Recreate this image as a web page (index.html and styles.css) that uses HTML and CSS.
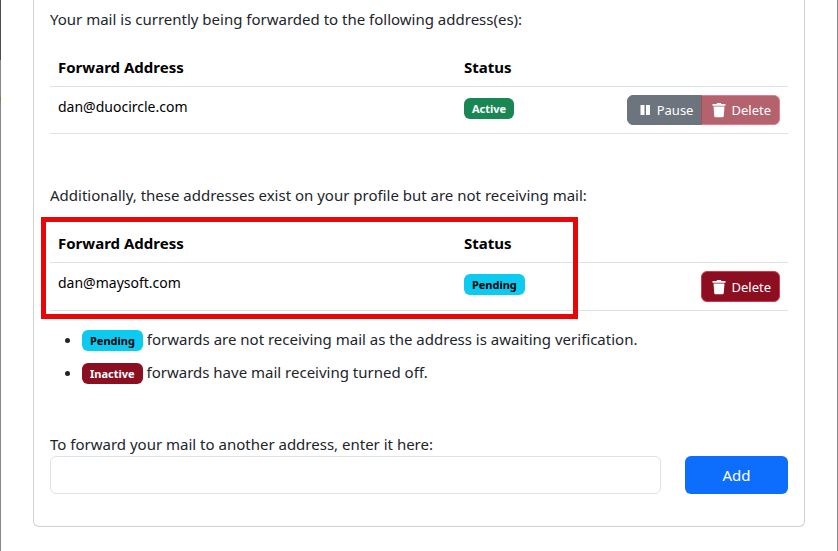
FILE: index.html
```html
<!DOCTYPE html>
<html lang="en">
  <head>
    <meta charset="UTF-8" />
    <meta name="viewport" content="width=device-width, initial-scale=1.0" />
    <title>Mail Forwarding</title>
    <link rel="stylesheet" href="styles.css">
  </head>
  <body>
    <svg class="sprite" aria-hidden="true">
      <symbol id="trash" viewBox="0 0 14 16">
        <path d="M.5 2h4l.7-1h3.600l.7 1h4v1.800H.5z" />
        <path d="M1.500 4.500h11l-.8 9.800q-.1.900-1 .9H3.300q-.9 0-1-.9z" />
      </symbol>
      <symbol id="pause" viewBox="0 0 14 16">
        <path d="M2.500 3h4v10h-4zM8 3h4v10H8z" />
      </symbol>
    </svg>
    <div class="page">
      <main class="panel">
        <p class="intro">Your mail is currently being forwarded to the following address(es):</p>
        <div class="forwards">
          <table>
            <thead>
              <tr>
                <th class="col-address">Forward Address</th>
                <th class="col-status">Status</th>
                <td></td>
              </tr>
            </thead>
            <tbody>
              <tr>
                <td class="address">dan@duocircle.com</td>
                <td><span class="badge active">Active</span></td>
                <td>
                  <div class="actions">
                    <button type="button" class="btn pause"><svg><use href="#pause" /></svg>Pause</button>
                    <button type="button" class="btn delete" disabled><svg><use href="#trash" /></svg>Delete</button>
                  </div>
                </td>
              </tr>
            </tbody>
          </table>
        </div>
        <p class="intro second">Additionally, these addresses exist on your profile but are not receiving mail:</p>
        <div class="forwards">
          <table>
            <thead>
              <tr>
                <th class="col-address">Forward Address</th>
                <th class="col-status">Status</th>
                <td></td>
              </tr>
            </thead>
            <tbody>
              <tr>
                <td class="address">dan@maysoft.com</td>
                <td><span class="badge pending">Pending</span></td>
                <td>
                  <div class="actions">
                    <button type="button" class="btn delete"><svg><use href="#trash" /></svg>Delete</button>
                  </div>
                </td>
              </tr>
            </tbody>
          </table>
          <div class="highlight"></div>
        </div>
        <ul class="legend">
          <li><span class="badge pending">Pending</span> forwards are not receiving mail as the address is awaiting verification.</li>
          <li><span class="badge inactive">Inactive</span> forwards have mail receiving turned off.</li>
        </ul>
        <form class="add-form">
          <label for="newAddress">To forward your mail to another address, enter it here:</label>
          <input type="email" id="newAddress" name="address" />
          <button type="submit">Add</button>
        </form>
      </main>
    </div>
  </body>
</html>
```
FILE: styles.css
```css
* {
  box-sizing: border-box;
}
body {
  margin: 0;
  font-family: 'Noto Sans', 'Open Sans', sans-serif;
  font-size: 15px;
  line-height: 24px;
  color: #212529;
  background-color: #fff;
}
.sprite {
  display: none;
}
.page {
  min-height: 100vh;
  padding: 0 32px 24px 33px;
  border-right: 1px solid #88888a;
  background: linear-gradient(#4c4a52 60px, #88888a 60px 97px, #6d8a4e 97px 101px, #88888a 101px)
    0 0 / 1px 100% no-repeat;
}
.panel {
  padding: 7px 16px 32px;
  border: 1px solid #ced0d2;
  border-top: none;
  border-radius: 0 0 6px 6px;
}
.intro {
  margin: 0 0 15px;
}
.intro.second {
  margin-top: 49px;
}
/* tables */
.forwards {
  position: relative;
}
table {
  width: 100%;
  table-layout: fixed;
  border-collapse: separate;
  border-spacing: 0;
}
th,
td {
  padding: 8px;
  text-align: left;
  vertical-align: top;
  color: #000;
  border-bottom: 1px solid #dee2e6;
}
th {
  padding: 9px 8px 7px;
}
.col-address {
  width: 55%;
}
.col-status {
  width: 20%;
}
.address {
  font-size: 14px;
}
.highlight {
  position: absolute;
  top: -5px;
  bottom: -8px;
  left: -9px;
  right: 210px;
  border: 5px solid #e90606;
  pointer-events: none;
}
.badge {
  display: inline-block;
  padding: 4px 8px;
  border-radius: 6px;
  font-size: 11px;
  font-weight: 700;
  line-height: 13px;
  color: #fff;
}
.active {
  background-color: #198754;
}
.pending {
  color: #000;
  background-color: #0dcaf0;
}
.inactive {
  background-color: #8c0f21;
}
/* row buttons */
.actions {
  display: flex;
  justify-content: flex-end;
}
.btn {
  display: flex;
  align-items: center;
  gap: 5px;
  height: 30px;
  padding: 0 8px 0 10px;
  border: 1px solid #6c757d;
  border-radius: 6px;
  font-family: inherit;
  font-size: 13px;
  color: #fff;
  background-color: #6c757d;
}
.btn svg {
  width: 14px;
  height: 16px;
  fill: currentColor;
}
.delete {
  height: 31px;
  border-color: #dc3545;
  background-color: #8c0f21;
}
.btn:disabled {
  opacity: 0.65;
}
.pause {
  border-radius: 6px 0 0 6px;
}
.pause + .delete {
  height: 30px;
  margin-left: -1px;
  border-radius: 0 6px 6px 0;
}
.legend {
  margin: 16px 0 48px;
  padding-left: 32px;
}
.legend li + li {
  margin-top: 9px;
}
/* add form */
.add-form {
  display: grid;
  grid-template-columns: repeat(12, 1fr);
  column-gap: 24px;
}
.add-form label {
  grid-column: span 12;
}
.add-form input {
  grid-column: span 10;
  width: 100%;
  height: 38px;
  padding: 6px 12px;
  border: 1px solid #dee2e6;
  border-radius: 6px;
  font: inherit;
}
.add-form button {
  grid-column: span 2;
  border: none;
  border-radius: 6px;
  font: inherit;
  color: #fff;
  background-color: #0d6efd;
}
```
